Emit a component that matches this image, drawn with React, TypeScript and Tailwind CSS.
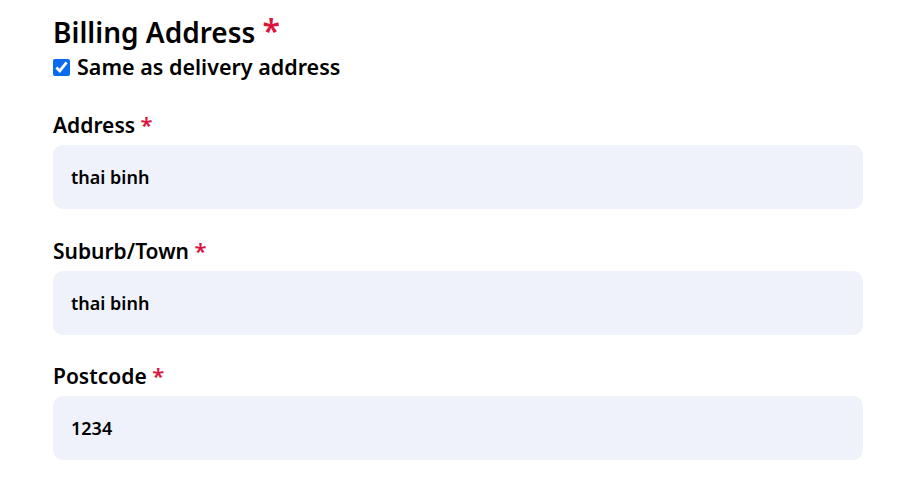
import React, { useState } from "react";

const font = { fontFamily: '"Noto Sans", "Lato", sans-serif' };

function Field({ label, value }: { label: string; value: string }) {
  const [v, setV] = useState(value);
  return (
    <div className="flex flex-col">
      <label className="text-[21px] font-semibold leading-[30px] text-black">
        {label} <span className="text-[22px] leading-none text-[#dc143c]">*</span>
      </label>
      <input
        value={v}
        onChange={(e) => setV(e.target.value)}
        className="mt-[5px] h-16 w-full rounded-[10px] bg-[#eff2fa] px-[18px] text-[18px] font-semibold text-black outline-none"
      />
    </div>
  );
}

export default function App() {
  const [same, setSame] = useState(true);
  return (
    <div className="min-h-[478px] bg-white pl-[53px] pr-[50px] pt-[12px]" style={font}>
      <h2 className="text-[28px] font-semibold leading-[40px] text-black">
        Billing Address <span className="text-[32px] leading-none text-[#dc143c]">*</span>
      </h2>
      <label className="flex items-center gap-[7px] text-[21.5px] font-semibold leading-[30px] text-black">
        <input
          type="checkbox"
          checked={same}
          onChange={(e) => setSame(e.target.checked)}
          className="h-[17px] w-[17px] accent-[#0b6bef]"
        />
        Same as delivery address
      </label>
      <div className="mt-[28px] flex flex-col gap-[26.5px]">
        <Field label="Address" value="thai binh" />
        <Field label="Suburb/Town" value="thai binh" />
        <Field label="Postcode" value="1234" />
      </div>
    </div>
  );
}
